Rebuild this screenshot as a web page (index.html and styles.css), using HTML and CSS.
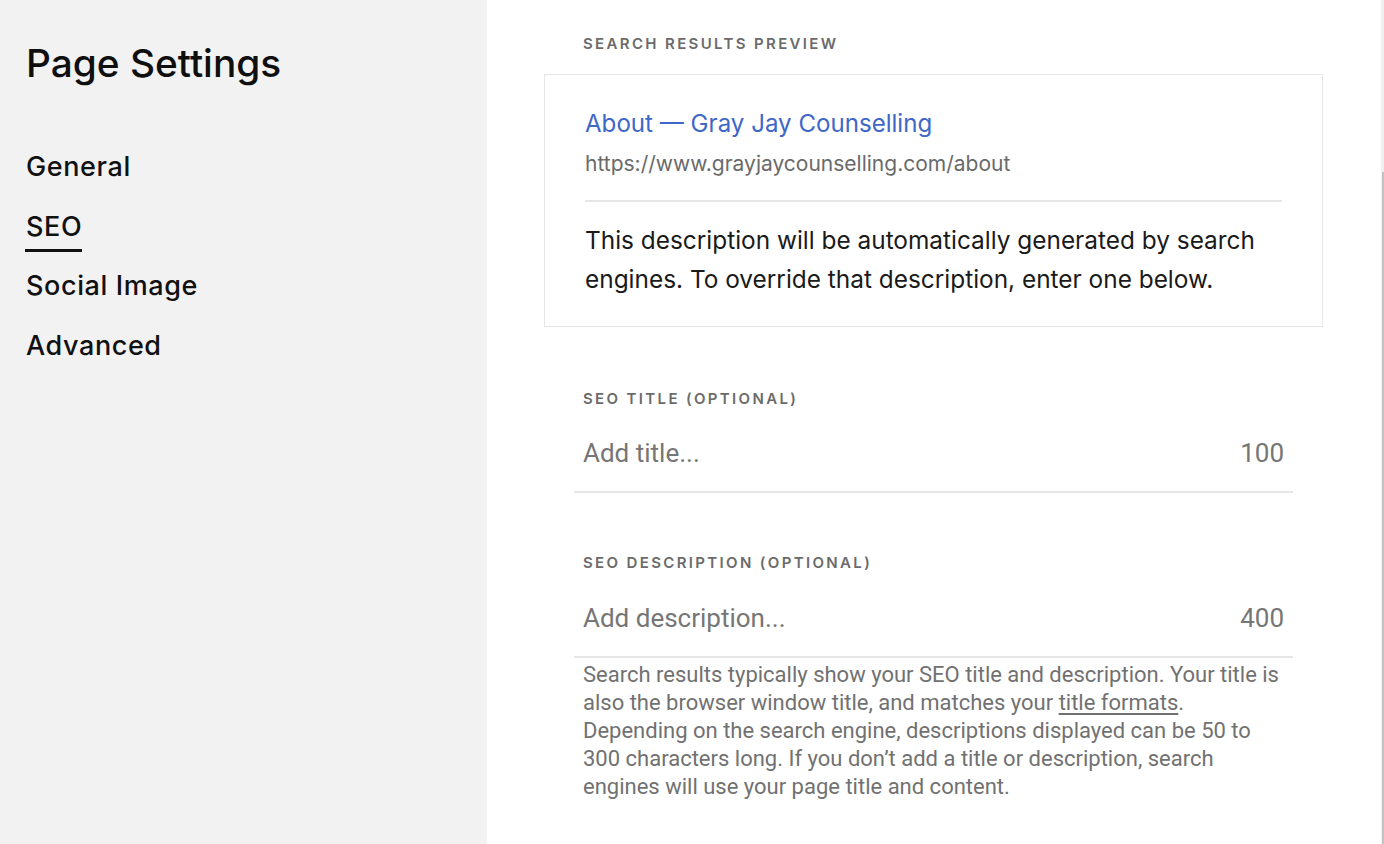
FILE: index.html
```html
<!DOCTYPE html>
<html lang="en">
<head>
<meta charset="utf-8">
<title>Page Settings</title>
<link rel="stylesheet" href="styles.css">
</head>
<body>
<div class="layout">
  <aside class="sidebar">
    <h1 class="sidebar-title">Page Settings</h1>
    <nav class="nav">
      <a class="nav-item">General</a>
      <a class="nav-item is-active">SEO</a>
      <a class="nav-item">Social Image</a>
      <a class="nav-item">Advanced</a>
    </nav>
  </aside>
  <main class="main">
    <div class="content">
      <div class="section-label preview-label">Search Results Preview</div>
      <div class="preview">
        <div class="preview-title">About — Gray Jay Counselling</div>
        <div class="preview-url">https://www.grayjaycounselling.com/about</div>
        <div class="preview-divider"></div>
        <p class="preview-desc">This description will be automatically generated by search engines. To override that description, enter one below.</p>
      </div>
      <div class="fields">
        <div class="field">
          <div class="section-label field-label">SEO Title (Optional)</div>
          <div class="field-input">
            <span class="placeholder">Add title...</span>
            <span class="counter">100</span>
          </div>
        </div>
        <div class="field">
          <div class="section-label field-label">SEO Description (Optional)</div>
          <div class="field-input">
            <span class="placeholder">Add description...</span>
            <span class="counter">400</span>
          </div>
          <p class="help">Search results typically show your SEO title and description. Your title is also the browser window title, and matches your <a class="help-link">title formats</a>. Depending on the search engine, descriptions displayed can be 50 to 300 characters long. If you don’t add a title or description, search engines will use your page title and content.</p>
        </div>
      </div>
    </div>
    <div class="scrollbar"><div class="scrollbar-thumb"></div></div>
  </main>
</div>
</body>
</html>
```

FILE: styles.css
```css
* { box-sizing: border-box; }
html, body { margin: 0; padding: 0; height: 100%; }
body {
  font-family: "Inter", "Noto Sans", sans-serif;
  color: #111;
  background: #fff;
  overflow: hidden;
}
.layout {
  display: flex;
  height: 844px;
}
.sidebar {
  width: 487px;
  flex: none;
  background: #f2f2f2;
  padding: 39px 0 0 26px;
}
.sidebar-title {
  margin: 0;
  font-size: 38.8px;
  line-height: 48px;
  font-weight: 500;
  color: #0f0f0f;
}
.nav {
  display: flex;
  flex-direction: column;
  margin-top: 62px;
}
.nav-item {
  align-self: flex-start;
  font-size: 27px;
  line-height: 36px;
  height: 59.5px;
  font-weight: 500;
  letter-spacing: 0.6px;
  color: #111;
  position: relative;
}
.nav-item.is-active::after {
  content: "";
  position: absolute;
  left: -1px;
  right: 0;
  top: 40px;
  height: 3px;
  background: #111;
}
.main {
  flex: 1;
  position: relative;
  padding: 34px 0 0 57px;
}
.content {
  width: 779px;
}
.section-label {
  font-family: "Inter", "Noto Sans", sans-serif;
  font-size: 15px;
  line-height: 20px;
  font-weight: 600;
  letter-spacing: 2.35px;
  text-transform: uppercase;
  color: #6b6b6b;
}
.preview-label {
  margin-left: 39px;
  margin-bottom: 20px;
}
.preview {
  border: 1px solid #e6e6e6;
  padding: 31px 40px 27px 40px;
}
.preview-title {
  font-size: 24.1px;
  line-height: 36px;
  color: #3e67c8;
}
.preview-url {
  margin-top: 8px;
  font-size: 21px;
  line-height: 28px;
  color: #6a6a6a;
}
.preview-divider {
  margin-top: 22px;
  height: 2px;
  background: #e6e6e6;
}
.preview-desc {
  margin: 19px 0 0;
  font-size: 24.4px;
  line-height: 39px;
  color: #1a1a1a;
}
.fields {
  margin-left: 30px;
  width: 719px;
}
.field {
  margin-top: 62px;
}
.field + .field {
  margin-top: 60px;
}
.field-label {
  padding-left: 9px;
  margin-bottom: 28px;
}
.field + .field .field-label {
  margin-bottom: 29px;
}
.field-input {
  display: flex;
  justify-content: space-between;
  align-items: center;
  padding: 0 9px 22px 9px;
  border-bottom: 2px solid #e6e6e6;
  font-family: "Roboto", "Liberation Sans", sans-serif;
  font-size: 26px;
  line-height: 32px;
  color: #767676;
}
.help {
  margin: 3px 0 0;
  padding: 0 9px;
  font-family: "Roboto", "Liberation Sans", sans-serif;
  font-size: 22px;
  line-height: 28px;
  color: #717171;
}
.help-link {
  text-decoration: underline;
  text-underline-offset: 3px;
  color: #717171;
}
.scrollbar {
  position: absolute;
  top: 0;
  right: 0;
  width: 3px;
  height: 100%;
  background: #f0f0f0;
}
.scrollbar-thumb {
  position: absolute;
  top: 172px;
  right: 0;
  width: 2px;
  bottom: 0;
  background: #c2c2c2;
}
```
